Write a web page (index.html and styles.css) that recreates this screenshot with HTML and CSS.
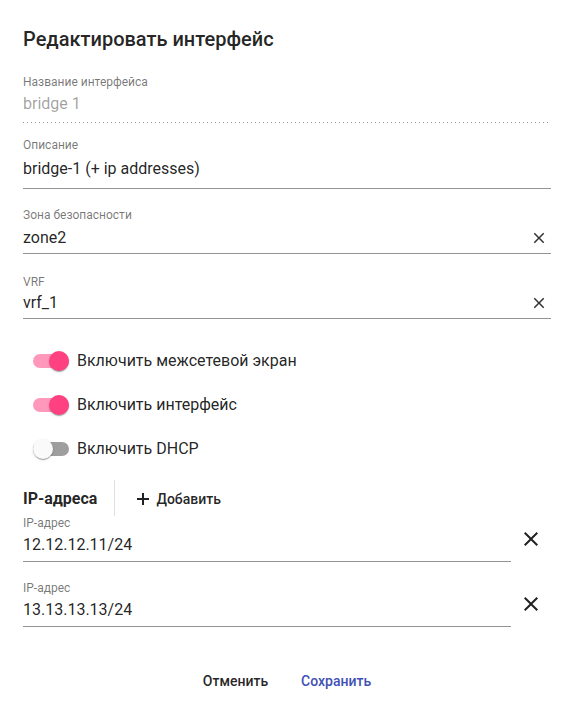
FILE: index.html
```html
<!DOCTYPE html>
<html lang="ru">
<head>
<meta charset="utf-8">
<title>Редактировать интерфейс</title>
<link rel="stylesheet" href="styles.css">
</head>
<body>
<div class="dialog">
  <h2 class="title">Редактировать интерфейс</h2>

  <div class="field field-name">
    <div class="label">Название интерфейса</div>
    <div class="value disabled">bridge 1</div>
    <div class="underline dotted"></div>
  </div>

  <div class="field field-desc">
    <div class="label">Описание</div>
    <div class="value">bridge-1 (+ ip addresses)</div>
    <div class="underline"></div>
  </div>

  <div class="field field-zone">
    <div class="label">Зона безопасности</div>
    <div class="value row">
      <span class="grow">zone2</span>
      <svg class="clear" width="18" height="18" viewBox="0 0 24 24"><path d="M19 6.41L17.59 5 12 10.59 6.41 5 5 6.41 10.59 12 5 17.59 6.41 19 12 13.41 17.59 19 19 17.59 13.41 12z" fill="currentColor"/></svg>
    </div>
    <div class="underline"></div>
  </div>

  <div class="field field-vrf">
    <div class="label">VRF</div>
    <div class="value row">
      <span class="grow">vrf_1</span>
      <svg class="clear" width="18" height="18" viewBox="0 0 24 24"><path d="M19 6.41L17.59 5 12 10.59 6.41 5 5 6.41 10.59 12 5 17.59 6.41 19 12 13.41 17.59 19 19 17.59 13.41 12z" fill="currentColor"/></svg>
    </div>
    <div class="underline"></div>
  </div>

  <div class="toggles">
    <div class="toggle on">
      <span class="bar"><span class="thumb"></span></span>
      <span class="toggle-label">Включить межсетевой экран</span>
    </div>
    <div class="toggle on">
      <span class="bar"><span class="thumb"></span></span>
      <span class="toggle-label">Включить интерфейс</span>
    </div>
    <div class="toggle">
      <span class="bar"><span class="thumb"></span></span>
      <span class="toggle-label">Включить DHCP</span>
    </div>
  </div>

  <div class="ip-header">
    <span class="ip-title">IP-адреса</span>
    <span class="divider"></span>
    <span class="add">
      <svg width="14" height="14" viewBox="0 0 14 14"><path d="M7 1V13M1 7H13" stroke="currentColor" stroke-width="2"/></svg>
      Добавить
    </span>
  </div>

  <div class="ip-row">
    <div class="field ip-field">
      <div class="label">IP-адрес</div>
      <div class="value">12.12.12.11/24</div>
      <div class="underline"></div>
    </div>
    <div class="remove">
      <svg width="24" height="24" viewBox="0 0 24 24"><path d="M19 6.41L17.59 5 12 10.59 6.41 5 5 6.41 10.59 12 5 17.59 6.41 19 12 13.41 17.59 19 19 17.59 13.41 12z" fill="currentColor"/></svg>
    </div>
  </div>

  <div class="ip-row second">
    <div class="field ip-field">
      <div class="label">IP-адрес</div>
      <div class="value">13.13.13.13/24</div>
      <div class="underline"></div>
    </div>
    <div class="remove">
      <svg width="24" height="24" viewBox="0 0 24 24"><path d="M19 6.41L17.59 5 12 10.59 6.41 5 5 6.41 10.59 12 5 17.59 6.41 19 12 13.41 17.59 19 19 17.59 13.41 12z" fill="currentColor"/></svg>
    </div>
  </div>

  <div class="actions">
    <span class="btn">Отменить</span>
    <span class="btn primary">Сохранить</span>
  </div>
</div>
</body>
</html>
```

FILE: styles.css
```css
* { box-sizing: border-box; }
html, body {
  margin: 0;
  background: #fff;
}
body {
  font-family: Roboto, "Noto Sans", sans-serif;
  color: rgba(0, 0, 0, 0.87);
}
.dialog {
  padding: 23px 24px 0 23px;
}
.title {
  margin: 0;
  font-size: 20px;
  font-weight: 500;
  line-height: 32px;
  color: rgba(0, 0, 0, 0.87);
}
.field {
  display: flex;
  flex-direction: column;
}
.label {
  font-size: 12px;
  line-height: 16px;
  color: rgba(0, 0, 0, 0.54);
}
.value {
  font-size: 16px;
  line-height: 20px;
}
.value.disabled {
  color: rgba(0, 0, 0, 0.38);
}
.row {
  display: flex;
  align-items: center;
}
.grow { flex: 1; }
.clear {
  color: rgba(0, 0, 0, 0.8);
  margin-right: 3px;
}
.underline {
  height: 1px;
  background: rgba(0, 0, 0, 0.42);
}
.underline.dotted {
  background: linear-gradient(to right, rgba(0, 0, 0, 0.42) 0, rgba(0, 0, 0, 0.42) 33%, transparent 0);
  background-size: 4px 1px;
  background-repeat: repeat-x;
}

.field-name { margin-top: 19px; }
.field-name .value { margin-top: 4px; margin-bottom: 8px; }

.field-desc { margin-top: 14px; }
.field-desc .value { margin-top: 6px; margin-bottom: 9px; }

.field-zone { margin-top: 18px; }
.field-zone .value { margin-top: 5px; margin-bottom: 5px; }

.field-vrf { margin-top: 20px; }
.field-vrf .value { margin-top: 3px; margin-bottom: 5px; }

.toggles {
  margin-top: 30px;
  display: flex;
  flex-direction: column;
  gap: 20px;
}
.toggle {
  display: flex;
  align-items: center;
  height: 24px;
}
.bar {
  position: relative;
  width: 36px;
  height: 14px;
  border-radius: 8px;
  background: rgba(0, 0, 0, 0.38);
  margin-left: 10px;
  margin-right: 8px;
  flex: none;
}
.thumb {
  position: absolute;
  top: -3px;
  left: 0;
  width: 20px;
  height: 20px;
  border-radius: 50%;
  background: #fafafa;
  box-shadow: 0 2px 1px -1px rgba(0, 0, 0, 0.2), 0 1px 1px 0 rgba(0, 0, 0, 0.14), 0 1px 3px 0 rgba(0, 0, 0, 0.12);
}
.toggle.on .bar { background: rgba(255, 64, 129, 0.54); }
.toggle.on .thumb { left: 16px; background: #ff4081; }
.toggle-label {
  font-size: 16px;
  line-height: 20px;
}

.ip-header {
  margin-top: 19px;
  height: 35px;
  display: flex;
  align-items: center;
}
.ip-title {
  font-size: 16px;
  font-weight: 700;
  padding-top: 1px;
}
.divider {
  width: 1px;
  align-self: stretch;
  background: rgba(0, 0, 0, 0.12);
  margin-left: 17px;
  margin-right: 21px;
  margin-bottom: -1px;
}
.add {
  display: flex;
  align-items: center;
  gap: 6px;
  font-size: 14px;
  font-weight: 500;
  padding-top: 2px;
}
.add svg { color: rgba(0, 0, 0, 0.87); }

.ip-row {
  display: flex;
  align-items: center;
}
.ip-row.second { margin-top: 18px; }
.ip-field { flex: 1; }
.ip-field .value { margin-top: 4px; margin-bottom: 6px; }
.remove {
  width: 40px;
  height: 40px;
  display: flex;
  align-items: center;
  justify-content: center;
  color: rgba(0, 0, 0, 0.87);
}

.actions {
  margin-top: 36px;
  display: flex;
  justify-content: center;
  gap: 1px;
}
.btn {
  height: 36px;
  line-height: 36px;
  padding: 0 16px;
  font-size: 14px;
  font-weight: 500;
  color: rgba(0, 0, 0, 0.87);
}
.btn.primary { color: #3f51b5; }
```
